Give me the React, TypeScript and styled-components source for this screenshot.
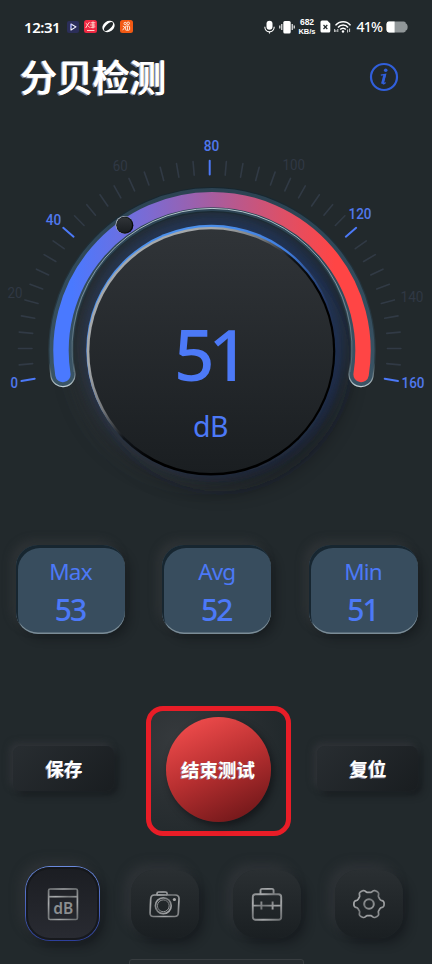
import React from "react";
import styled, { createGlobalStyle, css } from "styled-components";

const BLUE = "#4c79f7";

const GlobalStyle = createGlobalStyle`
  *, *::before, *::after { box-sizing: border-box; }
  body { margin: 0; background: #22292c; }
`;

const Screen = styled.main`
  display: flex;
  flex-direction: column;
  width: 432px;
  height: 964px;
  overflow: hidden;
  background: #22292c;
  color: #fff;
  font-family: "Noto Sans", "Noto Sans CJK SC", sans-serif;
`;

const StatusBar = styled.header`
  display: flex;
  align-items: center;
  justify-content: space-between;
  flex: none;
  height: 52px;
  padding: 1px 24px 0 24px;
`;

const StatusGroup = styled.div<{ $gap: number }>`
  display: flex;
  align-items: center;
  gap: ${(p) => p.$gap}px;
`;

const Clock = styled.span`
  width: 37px;
  margin-right: 1px;
  font-size: 15px;
  font-weight: 600;
  line-height: 20px;
  letter-spacing: -0.45px;
  white-space: nowrap;
`;

const NetSpeed = styled.span`
  display: flex;
  flex-direction: column;
  align-items: center;
  width: 18px;
  font-family: "Liberation Sans", sans-serif;
  font-weight: 700;
  white-space: nowrap;
`;

const NetValue = styled.span`
  font-size: 8.5px;
  line-height: 10px;
`;

const NetUnit = styled.span`
  font-size: 7.5px;
  line-height: 9px;
`;

const Percent = styled.span`
  width: 26px;
  margin-left: 2px;
  font-size: 14px;
  font-weight: 500;
  line-height: 20px;
  letter-spacing: -0.8px;
  white-space: nowrap;
`;

const TitleBar = styled.div`
  display: flex;
  align-items: center;
  justify-content: space-between;
  flex: none;
  height: 50px;
  padding: 0 33px 0 20px;
`;

const Title = styled.h1`
  margin: -2px 0 0;
  font-family: "Noto Sans CJK SC", sans-serif;
  font-size: 37px;
  font-weight: 500;
  line-height: 50px;
  letter-spacing: -0.7px;
  color: #fff;
  text-shadow: 0.5px 0 0 #fff, -1px 0 0 #a9abbb, -1.5px 1px 0 #777a8a;
`;

const Gauge = styled.section`
  display: grid;
  flex: none;
  height: 418px;
  margin-top: 18px;
  > * { grid-area: 1 / 1; }
`;

const Readout = styled.div`
  z-index: 1;
  display: flex;
  flex-direction: column;
  align-items: center;
  padding-top: 184px;
  padding-right: 11px;
  color: ${BLUE};
`;

const Level = styled.div`
  font-size: 71px;
  font-weight: 500;
  line-height: 100px;
  letter-spacing: -6px;
  margin-right: 4px;
`;

const Unit = styled.div`
  margin-top: 2px;
  font-size: 28.5px;
  line-height: 40px;
  letter-spacing: -0.6px;
`;

const Stats = styled.section`
  display: flex;
  justify-content: space-between;
  flex: none;
  margin-top: 7px;
  padding: 0 14.5px 0 16px;
`;

const StatCard = styled.div`
  display: flex;
  flex-direction: column;
  align-items: center;
  width: 109px;
  height: 89px;
  padding-top: 12px;
  border-radius: 22px;
  background: #384d5e;
  color: ${BLUE};
  box-shadow:
    inset 2px 3px 0 #172630,
    inset 0 -1.5px 0 #7b8c96,
    -5px -5px 10px rgba(72, 72, 76, 0.32),
    5px 5px 9px rgba(14, 16, 19, 0.38);
`;

const StatName = styled.span`
  font-size: 22.5px;
  line-height: 30px;
  letter-spacing: -0.8px;
`;

const StatValue = styled.span`
  margin-top: 3px;
  font-size: 30px;
  font-weight: 500;
  line-height: 40px;
  letter-spacing: -2px;
  padding-right: 1px;
`;

const Actions = styled.section`
  display: flex;
  align-items: center;
  justify-content: space-between;
  flex: none;
  height: 130px;
  margin-top: 72px;
  padding: 0 14px 0 13px;
`;

const label = css`
  font-family: "Noto Sans CJK SC", sans-serif;
  font-size: 18.5px;
  font-weight: 700;
  line-height: 24px;
  color: #fff;
  text-shadow: -1px 0.5px 0 #8d8da0;
`;

const buttonReset = css`
  display: flex;
  align-items: center;
  justify-content: center;
  padding: 0;
  border: 0;
`;

const SoftButton = styled.button`
  ${buttonReset}
  ${label}
  width: 101px;
  height: 45px;
  margin-bottom: 5px;
  padding: 0 0 2px 1px;
  border-radius: 8px;
  background: linear-gradient(135deg, #282d31, #191d20);
  box-shadow:
    -3px -3px 7px rgba(64, 64, 69, 0.52),
    4px 4px 7px rgba(17, 19, 22, 0.55);
`;

const FocusFrame = styled.div`
  display: flex;
  align-items: center;
  justify-content: center;
  width: 145px;
  height: 130px;
  margin-left: 5px;
  padding-bottom: 4px;
  border: 5px solid #e91d27;
  border-radius: 17px;
  background: radial-gradient(circle at 20% 25%, #363a3d 0%, #2b3033 40%, #22292c 75%);
`;

const StopButton = styled.button`
  ${buttonReset}
  ${label}
  width: 105px;
  height: 105px;
  border-radius: 50%;
  background: linear-gradient(155deg, #f04c4c 8%, #b93031 48%, #701719 92%);
  box-shadow: 3px 4px 7px rgba(14, 16, 18, 0.65);
  text-shadow: -1px 0.5px 0 #a87f8b;
  white-space: nowrap;
`;

const NavBar = styled.nav`
  display: flex;
  align-items: center;
  flex: none;
  height: 75px;
  margin-top: 30px;
  padding-left: 25px;
  gap: 34px;
`;

const NavItem = styled.button<{ $active?: boolean }>`
  ${buttonReset}
  width: 68px;
  height: 68px;
  border-radius: 23px;
  background: linear-gradient(#2a2f32, #1a1f22);
  box-shadow:
    -6px -6px 11px rgba(65, 66, 70, 0.38),
    5px 6px 10px rgba(14, 16, 19, 0.45);
  ${(p) =>
    p.$active &&
    css`
      width: 75px;
      height: 75px;
      margin-right: -3px;
      border: 1.5px solid transparent;
      border-radius: 25px;
      background:
        linear-gradient(#1b1d22, #292b32) padding-box,
        linear-gradient(#6b8bdf, #2d3f9b) border-box;
      box-shadow:
        inset 0 0 0 2px rgba(20, 22, 26, 0.85),
        -5px -5px 11px rgba(65, 66, 70, 0.35),
        5px 6px 10px rgba(14, 16, 19, 0.45);
    `}
`;

const HomeHandle = styled.div`
  flex: none;
  align-self: center;
  width: 175px;
  height: 8px;
  margin-top: 18px;
  border: 1px solid #383d40;
  border-radius: 3px;
  background: #262c2f;
`;

const TICKS = Array.from({ length: 41 }, (_, i) => {
  const a = ((190 - i * 5) * Math.PI) / 180;
  const cos = Math.cos(a);
  const sin = Math.sin(a);
  return {
    major: i % 10 === 0,
    x1: 209.7 + cos * 177.7,
    y1: 348.5 - sin * 174,
    x2: 209.7 + cos * 191.2,
    y2: 348.5 - sin * 187.7,
  };
});

const SCALE = [
  { v: "0", x: 14.2, y: 387.5, w: 7.5 },
  { v: "20", x: 15, y: 298, w: 15 },
  { v: "40", x: 53.5, y: 225, w: 15.5 },
  { v: "60", x: 120.3, y: 170.8, w: 15 },
  { v: "80", x: 211.5, y: 150.5, w: 15.5 },
  { v: "100", x: 293.7, y: 169.8, w: 22.5 },
  { v: "120", x: 360, y: 219.3, w: 23 },
  { v: "140", x: 412, y: 301.5, w: 23 },
  { v: "160", x: 413, y: 387.5, w: 23 },
];

const ARC = "M62.9 374.5 A151 151 0 1 1 361.1 374.5";

const Dial = () => (
  <svg width="432" height="418" viewBox="0 120 432 418">
    <defs>
      <linearGradient id="arc" gradientUnits="userSpaceOnUse" x1="72" y1="0" x2="335" y2="0">
        <stop offset="0" stopColor="#4a79ff" />
        <stop offset="0.28" stopColor="#7a6bd4" />
        <stop offset="0.55" stopColor="#aa5c9c" />
        <stop offset="0.8" stopColor="#dc5068" />
        <stop offset="1" stopColor="#ff4545" />
      </linearGradient>
      <linearGradient id="groove" x1="0" y1="0" x2="0" y2="1">
        <stop offset="0" stopColor="#2c4353" />
        <stop offset="1" stopColor="#3a5465" />
      </linearGradient>
      <linearGradient id="lip" gradientUnits="userSpaceOnUse" x1="0" y1="185" x2="0" y2="387">
        <stop offset="0" stopColor="#17262e" />
        <stop offset="0.88" stopColor="#2b3c45" />
        <stop offset="0.95" stopColor="#7c8c93" />
        <stop offset="1" stopColor="#c5d3d8" />
      </linearGradient>
      <linearGradient id="knob" x1="0" y1="0" x2="0" y2="1">
        <stop offset="0" stopColor="#303438" />
        <stop offset="1" stopColor="#1a1e21" />
      </linearGradient>
      <linearGradient id="rim" x1="0.1" y1="0.15" x2="0.85" y2="0.85">
        <stop offset="0.2" stopColor="#a5a8aa" />
        <stop offset="0.36" stopColor="#777a7d" />
        <stop offset="0.5" stopColor="#101419" />
        <stop offset="0.65" stopColor="#000" />
      </linearGradient>
      <linearGradient id="blueRim" x1="0.25" y1="0.15" x2="0.7" y2="0.7">
        <stop offset="0" stopColor="#4c91ed" />
        <stop offset="0.45" stopColor="#3f7ddf" />
        <stop offset="0.8" stopColor="#253d72" stopOpacity="0.5" />
        <stop offset="1" stopColor="#1c2638" stopOpacity="0" />
      </linearGradient>
      <linearGradient id="innerLine" x1="0" y1="0" x2="0" y2="1">
        <stop offset="0" stopColor="#b4c5cc" />
        <stop offset="1" stopColor="#80959d" stopOpacity="0.35" />
      </linearGradient>
      <filter id="soft" x="-40%" y="-40%" width="180%" height="180%">
        <feGaussianBlur stdDeviation="13" />
      </filter>
      <filter id="softer" x="-30%" y="-30%" width="160%" height="160%">
        <feGaussianBlur stdDeviation="8" />
      </filter>
    </defs>

    <circle cx="220" cy="362" r="121" fill="#15181b" opacity="0.75" filter="url(#soft)" />
    <circle cx="199" cy="353" r="121" fill="#3b3c43" opacity="0.65" filter="url(#soft)" />
    <circle cx="215" cy="344" r="129" fill="#243d74" opacity="0.6" filter="url(#softer)" />

    {TICKS.map(({ major, ...line }, i) => (
      <line
        key={i}
        {...line}
        stroke={major ? BLUE : "#313a45"}
        strokeWidth={major ? 2 : 1.6}
        strokeLinecap="round"
      />
    ))}
    {SCALE.map(({ v, x, y, w }, i) => (
      <text
        key={v}
        x={x}
        y={y}
        textAnchor="middle"
        textLength={w}
        lengthAdjust="spacingAndGlyphs"
        fontFamily="Roboto, sans-serif"
        fontSize="15.5"
        fontWeight={i % 2 ? 400 : 500}
        fill={i % 2 ? "#303844" : "#5078ec"}
      >
        {v}
      </text>
    ))}

    <path d={ARC} fill="none" stroke="url(#lip)" strokeWidth="25.4" strokeLinecap="round" />
    <path d={ARC} fill="none" stroke="url(#groove)" strokeWidth="23" strokeLinecap="round" />
    <path d={ARC} fill="none" stroke="url(#arc)" strokeWidth="15.4" strokeLinecap="round" />
    <path d="M74 372 A140 140 0 1 1 350 372" fill="none" stroke="url(#innerLine)" strokeWidth="1" />

    <circle cx="211.5" cy="350" r="125.2" fill="url(#blueRim)" />
    <circle cx="211" cy="351.3" r="124.3" fill="url(#rim)" />
    <circle cx="211.2" cy="351.2" r="121.9" fill="url(#knob)" />

    <circle cx="124.2" cy="224.7" r="8.8" fill="#a4adb6" />
    <circle cx="124.9" cy="225.2" r="8.5" fill="#080b0d" />
    <circle cx="124.3" cy="225" r="7.7" fill="url(#knob)" />
  </svg>
);

const InfoIcon = () => (
  <svg width="30" height="30" viewBox="0 0 30 30" fill="none">
    <circle cx="15" cy="15" r="13" stroke="#315fdb" strokeWidth="2.2" />
    <circle cx="16.7" cy="8.3" r="1.8" fill="#315fdb" />
    <path d="M11.8 13.2l4.8-.8-2.4 9c-.2.9.7.6 2.4-.9" stroke="#315fdb" strokeWidth="1.3" />
    <path d="M15.6 12.9l-2.3 8.8" stroke="#315fdb" strokeWidth="2.5" />
  </svg>
);

const PlayBadge = () => (
  <svg width="12" height="12" viewBox="0 0 12 12">
    <rect width="12" height="12" rx="2" fill="#2b2e59" />
    <path d="M4 3v6l5-3.1z" fill="#17204a" stroke="#f5f4ff" strokeWidth="1.1" strokeLinejoin="round" />
    <path d="M3.8 3v4" stroke="#7f87ee" />
  </svg>
);

const RedBadge = () => (
  <svg width="13" height="13" viewBox="0 0 13 13" fill="none">
    <rect width="13" height="13" rx="2.5" fill="#ef2943" />
    <path d="M1.7 3.2l1.8 1.6 2-2.7M3.7 4.5L1.7 8M4 5.7l1.8 2M6.6 2.8h4.8M6.2 5h5M9 1.4v7M6.6 7.4l4.7-.6M3 10.5h7.5" stroke="#ffe9dc" strokeWidth=".9" />
  </svg>
);

const OrbitBadge = () => (
  <svg width="13" height="13" viewBox="0 0 13 13">
    <ellipse cx="6.5" cy="6.5" rx="6.5" ry="5.2" transform="rotate(-35 6.5 6.5)" fill="#fff" />
    <ellipse cx="6.5" cy="6.5" rx="5.9" ry="2.6" transform="rotate(-44 6.5 6.5)" fill="#22292c" />
  </svg>
);

const OrangeBadge = () => (
  <svg width="13" height="13" viewBox="0 0 13 13" fill="none">
    <rect width="13" height="13" rx="2.5" fill="#f25913" />
    <g stroke="#fff3e9" strokeWidth=".9">
      <circle cx="5.2" cy="3.5" r="1.2" />
      <circle cx="8.2" cy="3.3" r="1.3" />
      <rect x="5.4" y="6" width="4.2" height="4.2" rx=".8" />
      <path d="M2.8 6.1l2 1-2.1 3.1M7.4 6v4" />
    </g>
  </svg>
);

const MicIcon = () => (
  <svg width="11" height="14" viewBox="0 0 11 14" fill="none">
    <rect x="2.5" y="0.7" width="6" height="9" rx="3" fill="#fff" />
    <path d="M.8 6.8c0 6.7 9.4 6.7 9.4 0M5.5 11.5v2" stroke="#fff" strokeWidth="1.1" />
  </svg>
);

const VibrateIcon = () => (
  <svg width="16" height="14" viewBox="0 0 16 14" fill="none">
    <rect x="4.3" y="1" width="7.4" height="12.4" rx="1.5" fill="#fff" />
    <path d="M2.8 4v6M13.2 4v6M.8 5.5v3M15.2 5.5v3" stroke="#fff" strokeWidth="1.1" />
  </svg>
);

const SimIcon = () => (
  <svg width="11" height="13" viewBox="0 0 11 13">
    <path d="M2 .5h5.3l3 3V11a1.5 1.5 0 0 1-1.5 1.5H2A1.5 1.5 0 0 1 .5 11V2A1.5 1.5 0 0 1 2 .5z" fill="#fff" />
    <path d="M3.5 5l3.8 4M7.3 5L3.5 9" stroke="#22292c" strokeWidth="1.2" />
  </svg>
);

const WifiIcon = () => (
  <svg width="17" height="14" viewBox="0 0 17 14" fill="none">
    <path d="M1.5 5.4c4-5 11.5-5 15 0M4 7.5c2.7-3.3 7.7-3.3 10 0M6.2 9.5c1.5-1.8 4.2-1.8 5.6 0" stroke="#fff" strokeWidth="1.5" />
    <circle cx="9" cy="11.5" r="1.2" fill="#fff" />
    <path d="M.7 9v3M.7 11h2.1M3.8 9v3M13.6 9.5v3M15.6 8.5v3.5" stroke="#fff" strokeWidth=".8" />
  </svg>
);

const BatteryIcon = () => (
  <svg width="22" height="12" viewBox="0 0 22 12">
    <rect x="0.5" y="0.6" width="19.5" height="10.8" rx="2.4" fill="#919799" />
    <path d="M20 2.4c2.2 1.2 2.2 6 0 7.2z" fill="#919799" />
    <path d="M8.6.6H3A2.5 2.5 0 0 0 .5 3v6A2.5 2.5 0 0 0 3 11.4h5.6z" fill="#fff" />
  </svg>
);

const Metal = ({ id }: { id: string }) => (
  <defs>
    <linearGradient id={id} gradientUnits="userSpaceOnUse" x1="4" y1="3" x2="32" y2="32">
      <stop offset="0" stopColor="#777a7c" />
      <stop offset="0.25" stopColor="#a9abad" />
      <stop offset="0.48" stopColor="#75787a" />
      <stop offset="0.72" stopColor="#a4a6a8" />
      <stop offset="1" stopColor="#6f7274" />
    </linearGradient>
  </defs>
);

const DbText = styled.text`
  font-family: "Noto Sans", sans-serif;
  font-size: 15.5px;
  font-weight: 600;
`;

const MeterIcon = () => (
  <svg width="36" height="36" viewBox="0 0 36 36" fill="none">
    <Metal id="m1" />
    <g stroke="url(#m1)" strokeWidth="1.7">
      <rect x="3.6" y="3" width="28.8" height="30.5" rx="1.5" />
      <path d="M4 10.7h28" />
    </g>
    <DbText x="18.2" y="28" textAnchor="middle" textLength="20" lengthAdjust="spacingAndGlyphs" fill="#8b8e90">
      dB
    </DbText>
  </svg>
);

const CameraIcon = () => (
  <svg width="36" height="36" viewBox="0 0 36 36" fill="none">
    <Metal id="m2" />
    <g stroke="url(#m2)" strokeWidth="1.7">
      <path d="M10 9V7.5C10 6.4 10.7 6 11.6 6h6.8c1 0 1.7.5 1.7 1.5V9h8.2c2.3 0 3.7 1.3 3.7 3.7l-.7 14.5c-.1 2.2-1.4 3.3-3.6 3.3H6.4c-2.2 0-3.4-1.2-3.3-3.5l.6-13.8C3.8 10.3 5 9 7.3 9z" />
      <path d="M10.2 9h9.8" />
      <circle cx="16.3" cy="19.8" r="7.9" />
      <circle cx="16.3" cy="19.8" r="5.9" strokeWidth="1" />
    </g>
    <circle cx="27.4" cy="13.5" r="1.6" fill="#aaa" />
  </svg>
);

const CaseIcon = () => (
  <svg width="36" height="36" viewBox="0 0 36 36" fill="none">
    <Metal id="m3" />
    <g stroke="url(#m3)" strokeWidth="1.9">
      <rect x="3.8" y="8.3" width="28.4" height="25.5" rx="2.8" />
      <path d="M11.5 8V4.5c0-1 .5-1.6 1.6-1.6H23c1 0 1.6.6 1.6 1.6V8" />
      <path d="M4 19.6h28M12.4 15.5v8M23.6 15.5v8" />
    </g>
  </svg>
);

const GEAR = (() => {
  const points = Array.from({ length: 120 }, (_, i) => {
    const a = (i / 120) * Math.PI * 2;
    const wave = Math.cos(6 * a);
    const r = 13.5 + 1.9 * Math.tanh(wave * 1.8) - 0.2 * wave;
    return `${(18 + r * Math.cos(a)).toFixed(2)} ${(18 + r * Math.sin(a) * 0.97).toFixed(2)}`;
  });
  return `M${points.join("L")}Z`;
})();

const GearIcon = () => (
  <svg width="36" height="36" viewBox="0 0 36 36" fill="none">
    <Metal id="m4" />
    <g stroke="url(#m4)" strokeWidth="1.7" strokeLinejoin="round">
      <path d={GEAR} />
      <circle cx="18" cy="18" r="4.8" strokeWidth="2" />
    </g>
  </svg>
);

const STATS = [
  { name: "Max", value: 53 },
  { name: "Avg", value: 52 },
  { name: "Min", value: 51 },
];

export default function App() {
  return (
    <Screen>
      <GlobalStyle />
      <StatusBar>
        <StatusGroup $gap={5}>
          <Clock>12:31</Clock>
          <PlayBadge />
          <RedBadge />
          <OrbitBadge />
          <OrangeBadge />
        </StatusGroup>
        <StatusGroup $gap={3.5}>
          <MicIcon />
          <VibrateIcon />
          <NetSpeed>
            <NetValue>682</NetValue>
            <NetUnit>KB/s</NetUnit>
          </NetSpeed>
          <SimIcon />
          <WifiIcon />
          <Percent>41%</Percent>
          <BatteryIcon />
        </StatusGroup>
      </StatusBar>

      <TitleBar>
        <Title>分贝检测</Title>
        <InfoIcon />
      </TitleBar>

      <Gauge>
        <Dial />
        <Readout>
          <Level>51</Level>
          <Unit>dB</Unit>
        </Readout>
      </Gauge>

      <Stats>
        {STATS.map((s) => (
          <StatCard key={s.name}>
            <StatName>{s.name}</StatName>
            <StatValue>{s.value}</StatValue>
          </StatCard>
        ))}
      </Stats>

      <Actions>
        <SoftButton>保存</SoftButton>
        <FocusFrame>
          <StopButton>结束测试</StopButton>
        </FocusFrame>
        <SoftButton>复位</SoftButton>
      </Actions>

      <NavBar>
        <NavItem $active aria-label="dB">
          <MeterIcon />
        </NavItem>
        <NavItem aria-label="Camera">
          <CameraIcon />
        </NavItem>
        <NavItem aria-label="Tools">
          <CaseIcon />
        </NavItem>
        <NavItem aria-label="Settings">
          <GearIcon />
        </NavItem>
      </NavBar>
      <HomeHandle />
    </Screen>
  );
}
